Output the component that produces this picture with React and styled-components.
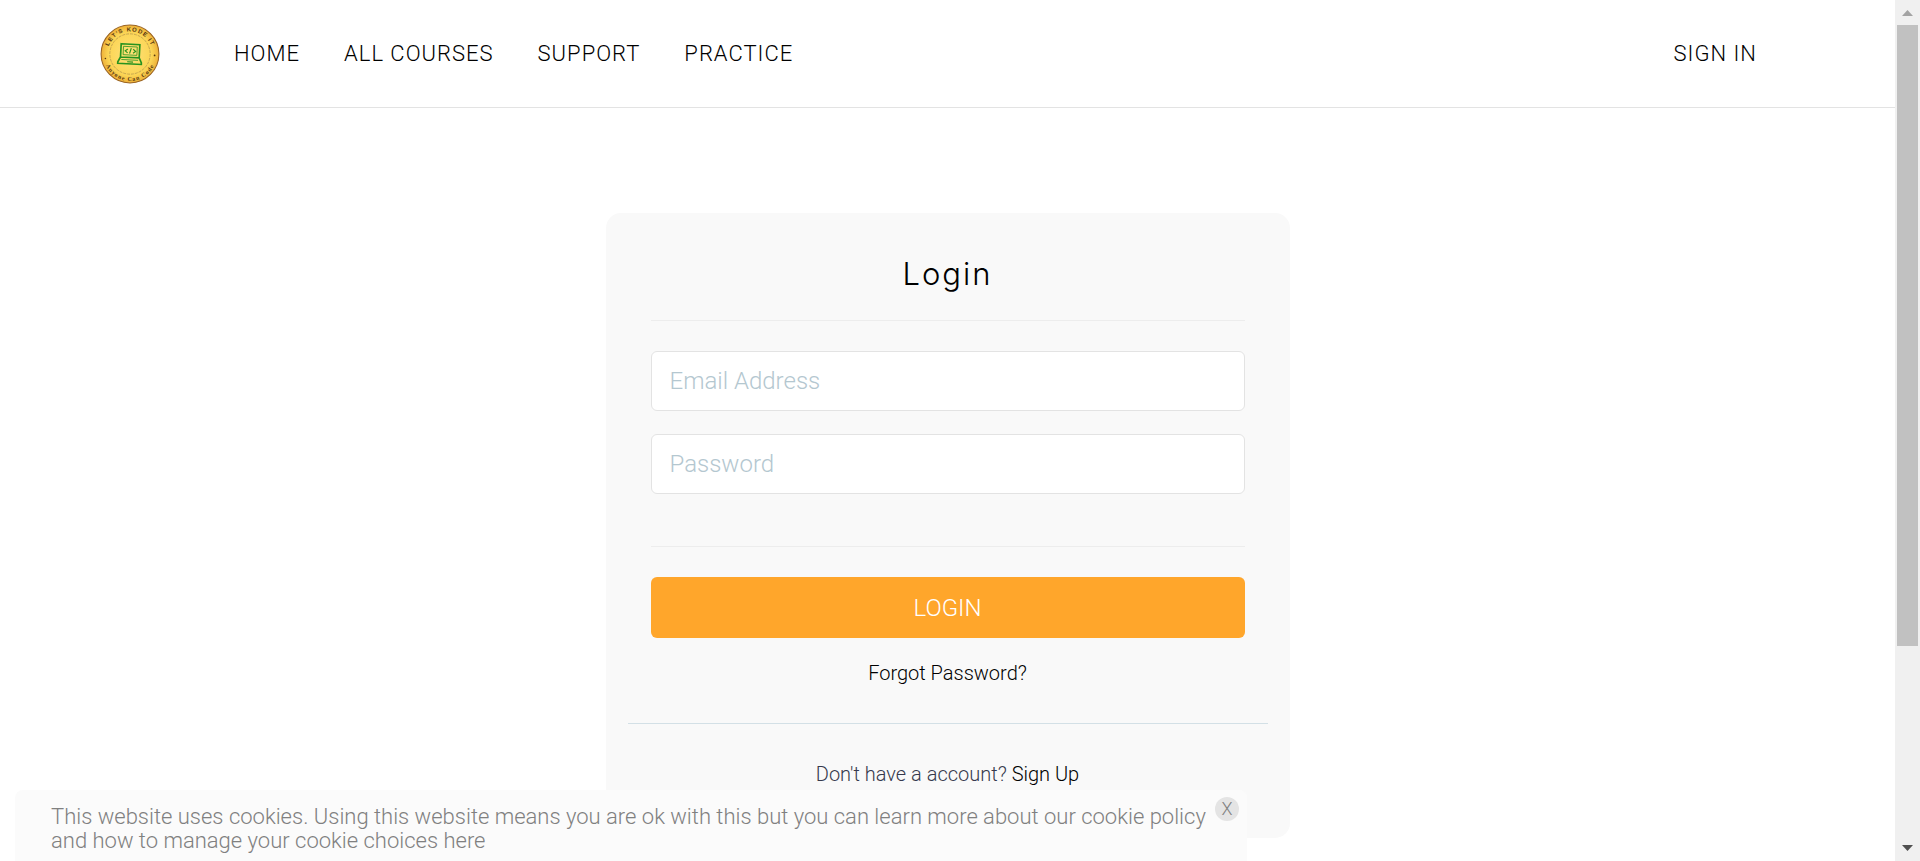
import React from "react";
import styled, { createGlobalStyle } from "styled-components";

const Global = createGlobalStyle`
  *, *::before, *::after { box-sizing: border-box; }
  body { margin: 0; background: #fff; color: #36394d; font-family: Roboto, "Liberation Sans", sans-serif; font-weight: 300; font-size: 20px; line-height: 24px; }
`;

const Shell = styled.div`
  display: flex;
  min-height: 100vh;
`;

const Page = styled.div`
  flex: 1;
  min-width: 0;
`;

const Header = styled.header`
  display: flex;
  align-items: center;
  height: 108px;
  padding: 0 138px 0 100px;
  border-bottom: 1px solid #e3e3e3;
`;

const LogoLink = styled.a`
  display: flex;
  margin-right: 74px;
`;

const Nav = styled.nav`
  flex: 1;
  display: flex;
  gap: 44px;
`;

const NavLink = styled.a`
  color: #000;
  font-size: 22px;
  text-decoration: none;
  text-transform: uppercase;
  letter-spacing: 1px;
`;

const Main = styled.main`
  display: flex;
  justify-content: center;
  padding: 105px 20px 0;
`;

const Card = styled.section`
  width: 100%;
  max-width: 684px;
  padding: 40px 22px 52px;
  border-radius: 15px;
  background: #f9f9f9;
  text-align: center;
`;

const Form = styled.form`
  display: flex;
  flex-direction: column;
  padding: 0 23px;
`;

const Title = styled.h1`
  margin: 0 0 26px;
  font-family: Inter, Roboto, sans-serif;
  font-size: 31px;
  font-weight: 300;
  line-height: 41px;
  letter-spacing: 2px;
  color: #000;
`;

const Rule = styled.hr`
  width: 100%;
  height: 1px;
  margin: 0 0 30px;
  border: 0;
  background: ${(p) => (p.$strong ? "#d3e0e6" : "#ededed")};
`;

const Field = styled.input`
  width: 100%;
  height: 60px;
  margin-bottom: ${(p) => (p.$last ? "52px" : "23px")};
  padding: 0 18px;
  border: 1px solid #e3e3e3;
  border-radius: 6px;
  background: #fff;
  font: inherit;
  font-size: 24px;
  &::placeholder { color: #b4c7d0; opacity: 1; }
`;

const Submit = styled.button`
  height: 61px;
  margin-bottom: 23px;
  border: 0;
  border-radius: 6px;
  background: #ffa62b;
  color: #fff;
  font: inherit;
  font-size: 24px;
`;

const TextLink = styled.a`
  color: #000;
  text-decoration: none;
`;

const Forgot = styled.p`
  margin: 0 0 38px;
`;

const SignUp = styled.p`
  margin: 0;
  padding-top: 8px;
`;

const CookieBar = styled.aside`
  position: fixed;
  left: 15px;
  bottom: 0;
  width: calc(65% - 16px);
  display: flex;
  align-items: flex-start;
  justify-content: space-between;
  padding: 7px 8px 6px 36px;
  border-radius: 8px 8px 0 0;
  background: #fbfbfb;
  color: #808080;
`;

const CookieText = styled.p`
  margin: 8px 0 2px;
  font-size: 22px;
`;

const CloseButton = styled.button`
  flex: none;
  width: 24px;
  height: 24px;
  padding: 0;
  border: 0;
  border-radius: 50%;
  background: #e4e4e4;
  color: #808080;
  font: inherit;
  font-size: 18px;
`;

const Track = styled.div`
  flex: none;
  display: flex;
  flex-direction: column;
  width: 25px;
  height: 100vh;
  padding: 0 2px;
  background: #f0f0f0;
`;

const Thumb = styled.div`
  flex: 621;
  background: #c1c1c1;
`;

const Rest = styled.div`
  flex: 190;
`;

const ArrowBox = styled.svg`
  flex: none;
  width: 21px;
  height: 25px;
`;

function Logo() {
  return (
    <svg width="60" height="60" viewBox="0 0 61 61" role="img" aria-label="Let's Kode It">
      <defs>
        <radialGradient id="coin">
          <stop offset="0" stopColor="#ffe27a" />
          <stop offset="0.75" stopColor="#fbd555" />
          <stop offset="1" stopColor="#eeb138" />
        </radialGradient>
        <path id="arcTop" d="M7.500 30.500a23 23 0 0 1 46 0" />
        <path id="arcBottom" d="M3.500 31a27 27 0 0 0 54 0" />
      </defs>
      <circle cx="30.5" cy="30.5" r="29.4" fill="url(#coin)" stroke="#9a6423" strokeWidth="1.1" />
      <circle cx="30.5" cy="30.5" r="20.5" fill="none" stroke="#b99a4c" strokeWidth="0.8" strokeDasharray="3 1" />
      <g fill="#553610">
        <text fontFamily="Liberation Sans" fontSize="6" fontWeight="700" letterSpacing="1" textAnchor="middle"><textPath href="#arcTop" startOffset="50%">LET'S KODE IT</textPath></text>
        <text fontSize="6" fontFamily="Liberation Serif" fontWeight="700" letterSpacing="1" textAnchor="middle"><textPath href="#arcBottom" startOffset="50%">Anyone Can Code</textPath></text>
      </g>
      <circle cx="5.5" cy="35" r="0.8" fill="#553610" />
      <circle cx="55.5" cy="32" r="0.9" fill="#553610" />
      <g transform="rotate(3 30 31)" fill="none" stroke="#27931f">
        <path d="M21 20.500h19v13.500H21zM21 34l-2.500 5v1.500h24V39L40 34" strokeWidth="1.700" />
        <path d="M23.500 23h14v8.500h-14zM22 36.500h17" strokeWidth="0.8" />
        <path d="M28 25.500l-2.500 2 2.500 2M33.500 25.500l2.500 2-2.500 2M31.500 24.500l-1.500 5.500M28 38.500h6" strokeWidth="1.200" />
      </g>
    </svg>
  );
}

const links = ["Home", "All Courses", "Support", "Practice"];

export default function App() {
  return (
    <>
      <Global />
      <Shell>
        <Page>
          <Header>
            <LogoLink href="#"><Logo /></LogoLink>
            <Nav>{links.map((l) => <NavLink href="#" key={l}>{l}</NavLink>)}</Nav>
            <NavLink href="#">Sign In</NavLink>
          </Header>
          <Main>
            <Card>
              <Form onSubmit={(e) => e.preventDefault()}>
                <Title>Login</Title>
                <Rule />
                <Field type="email" placeholder="Email Address" aria-label="Email Address" />
                <Field type="password" placeholder="Password" aria-label="Password" $last />
                <Rule />
                <Submit type="submit">LOGIN</Submit>
                <Forgot><TextLink href="#">Forgot Password?</TextLink></Forgot>
              </Form>
              <Rule $strong />
              <SignUp>Don't have a account? <TextLink href="#">Sign Up</TextLink></SignUp>
            </Card>
          </Main>
        </Page>
        <Track aria-hidden="true">
          <ArrowBox viewBox="0 0 21 25"><path d="M5 16l5.500-6 5.500 6z" fill="#a3a3a3" /></ArrowBox>
          <Thumb />
          <Rest />
          <ArrowBox viewBox="0 0 21 25"><path d="M5 9l5.500 6L16 9z" fill="#505050" /></ArrowBox>
        </Track>
      </Shell>
      <CookieBar>
        <CookieText>This website uses cookies. Using this website means you are ok with this but you can learn more about our cookie policy and how to manage your cookie choices here</CookieText>
        <CloseButton type="button" aria-label="Close">X</CloseButton>
      </CookieBar>
    </>
  );
}
